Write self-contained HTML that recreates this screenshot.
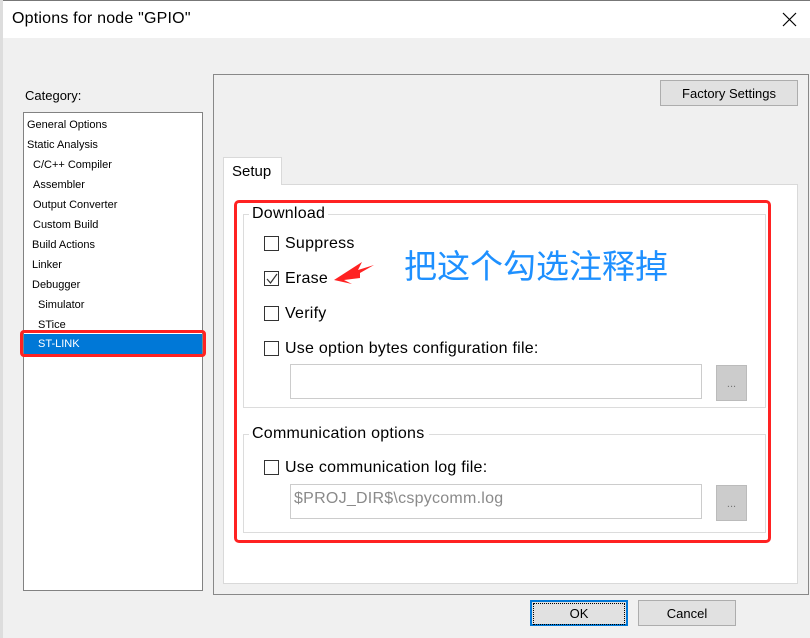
<!DOCTYPE html>
<html><head><meta charset="utf-8"><style>
*{box-sizing:border-box;margin:0;padding:0}
body{width:810px;height:638px;overflow:hidden;background:#f0f0f0;font-family:"Liberation Sans","Noto Sans CJK SC",sans-serif;position:relative;color:#000}
.a{position:absolute}
.cb{position:absolute;width:15px;height:15px;border:1px solid #333;background:#fff}
.t15{font-size:16px;letter-spacing:0.25px;position:absolute}
.li{position:absolute;font-size:11px;left:27px;height:20px;line-height:20px;width:176px}
.btn{position:absolute;background:#e1e1e1;border:1px solid #adadad;font-size:13px;text-align:center}
</style></head><body>
<div class="a" style="left:0;top:0;width:810px;height:1px;background:#777"></div>
<div class="a" style="left:0;top:0;width:3px;height:638px;background:#ddd"></div>
<div class="a" style="left:3px;top:1px;width:807px;height:37px;background:#fff"></div>
<div class="a" style="left:12px;top:10px;font-size:16px;letter-spacing:0.2px">Options for node "GPIO"</div>
<svg class="a" style="left:782px;top:12px" width="15" height="15"><path d="M1 1L14 14M14 1L1 14" stroke="#000" stroke-width="1.2"/></svg>

<div class="a" style="left:25px;top:88px;font-size:13px">Category:</div>
<div class="a" style="left:23px;top:112px;width:180px;height:479px;background:#fff;border:1px solid #828282"></div>
<div class="li" style="top:115px">General Options</div>
<div class="li" style="top:135px">Static Analysis</div>
<div class="li" style="top:155px;padding-left:6px">C/C++ Compiler</div>
<div class="li" style="top:175px;padding-left:6px">Assembler</div>
<div class="li" style="top:195px;padding-left:6px">Output Converter</div>
<div class="li" style="top:215px;padding-left:6px">Custom Build</div>
<div class="li" style="top:235px;padding-left:5px">Build Actions</div>
<div class="li" style="top:255px;padding-left:5px">Linker</div>
<div class="li" style="top:275px;padding-left:5px">Debugger</div>
<div class="li" style="top:295px;padding-left:11px">Simulator</div>
<div class="li" style="top:315px;padding-left:11px">STice</div>
<div class="li" style="top:334px;left:24px;width:178px;background:#0078d7;color:#fff;padding-left:14px">ST-LINK</div>
<div class="a" style="left:20px;top:330px;width:186px;height:27px;border:3px solid #f22;border-radius:4px"></div>

<div class="a" style="left:213px;top:74px;width:596px;height:521px;border:1px solid #888;background:#f0f0f0"></div>
<div class="btn" style="left:660px;top:80px;width:138px;height:26px;line-height:25px">Factory Settings</div>
<div class="a" style="left:223px;top:184px;width:575px;height:400px;background:#fff;border:1px solid #d9d9d9"></div>
<div class="a" style="left:223px;top:157px;width:59px;height:28px;background:#fff;border:1px solid #d9d9d9;border-bottom:none;font-size:15px;padding:5px 0 0 8px">Setup</div>

<div class="a" style="left:243px;top:214px;width:523px;height:194px;border:1px solid #dcdcdc"></div>
<div class="a" style="left:249px;top:205px;background:#fff;padding:0 3px" ><span class="t15" style="position:static">Download</span></div>
<div class="cb" style="left:264px;top:236px"></div><div class="t15" style="left:285px;top:235px">Suppress</div>
<div class="cb" style="left:264px;top:271px"></div><svg class="a" style="left:266px;top:273px" width="12" height="12"><path d="M1 6L4.5 10L11 1" stroke="#333" fill="none" stroke-width="1.2"/></svg><div class="t15" style="left:285px;top:270px">Erase</div>
<div class="cb" style="left:264px;top:306px"></div><div class="t15" style="left:285px;top:305px">Verify</div>
<div class="cb" style="left:264px;top:341px"></div><div class="t15" style="left:285px;top:340px">Use option bytes configuration file:</div>
<div class="a" style="left:290px;top:364px;width:412px;height:35px;border:1px solid #ccc;background:#fff"></div>
<div class="a" style="left:716px;top:365px;width:31px;height:36px;background:#ccc;border:1px solid #bbb;font-size:11px;color:#777;text-align:center;padding-top:12px">...</div>

<div class="a" style="left:243px;top:434px;width:523px;height:99px;border:1px solid #dcdcdc"></div>
<div class="a" style="left:249px;top:425px;background:#fff;padding:0 3px;height:20px;width:180px"><span class="t15" style="left:3px;top:0">Communication options</span></div>
<div class="cb" style="left:264px;top:460px"></div><div class="t15" style="left:285px;top:459px">Use communication log file:</div>
<div class="a" style="left:290px;top:484px;width:412px;height:35px;border:1px solid #ccc;background:#fff;color:#8a8a8a;padding:5px 0 0 3px"><span class="t15" style="position:static">$PROJ_DIR$\cspycomm.log</span></div>
<div class="a" style="left:716px;top:485px;width:31px;height:36px;background:#ccc;border:1px solid #bbb;font-size:11px;color:#777;text-align:center;padding-top:12px">...</div>

<div class="a" style="left:234px;top:200px;width:537px;height:343px;border:3px solid #f22;border-radius:5px"></div>
<svg class="a" style="left:330px;top:258px" width="45" height="28"><path d="M4 22L32 4L28 12L44 7L30 15L30 20L14 22L22 26Z" fill="#f22"/><path d="M5 23L44 7L20 17Z" fill="#f22"/></svg>
<div class="a" style="left:404px;top:244px;font-size:33px;color:#1e90ff;font-family:'Noto Sans CJK SC',sans-serif;line-height:40px">把这个勾选注释掉</div>

<div class="btn" style="left:530px;top:600px;width:98px;height:26px;line-height:24px;border:2px solid #0078d7"><span style="display:block;margin:1px;border:1px dotted #000;line-height:20px">OK</span></div>
<div class="btn" style="left:638px;top:600px;width:98px;height:26px;line-height:25px">Cancel</div>
</body></html>
